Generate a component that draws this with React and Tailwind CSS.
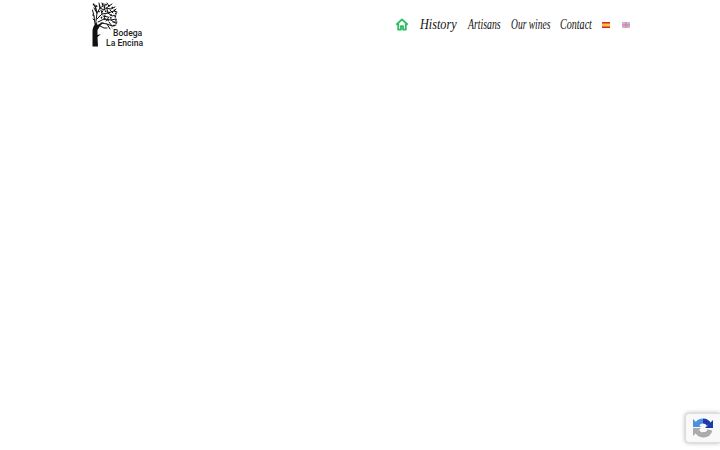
import React from "react";

function Tree() {
  return (
    <svg width="27" height="45" viewBox="0 0 27 45" className="block">
      <path d="M0.5 44.5V29C0.5 27 1.5 24 3 22L4 19 5.5 23 9 21 12 20 8 24 5.5 28 5.5 33 9 32 5.5 35 6 44.5Z" fill="#111" />
      <g stroke="#111" strokeWidth="1" fill="none" strokeLinecap="round">
        <path d="M3 22 2 14 0.5 8M4 19 5 11 3 3M2 14 0.5 13M5 11 8 6 7 1M5 11 2 6 M8 6 11 4 10 1M8 6 12 8 17 4 15 1M12 8 13 3M17 4 20 2M14 6 19 7 23 5" />
        <path d="M5 17 10 12 16 11 22 9 25 10M10 12 9 8M16 11 15 7 M16 11 20 14 24 13M6 20 12 17 19 18 24 17M12 17 13 13M19 18 23 21M9 21 15 22 20 24 24 23M15 22 18 27M8 24 12 26 15 26M20 24 17 20M22 9 24 7M2 3 4 7M1 17 3 19M12 2 12 5M18 8 21 11M11 14 16 15M14 19 17 15M21 20 25 20" />
      </g>
      <g stroke="#111" strokeWidth="1.6" strokeDasharray="1.5 2" fill="none">
        <path d="M1 2 6 5 11 2 16 3 21 6 24 11 23 16 25 20 20 26" />
        <path d="M3 8 8 10 13 9 18 11 20 15 16 18 10 16 7 14" />
      </g>
    </svg>
  );
}

function Flag({ children }) {
  return <svg width="8" height="6" viewBox="0 0 8 6" className="block">{children}</svg>;
}

const navClass = "block shrink-0 origin-left whitespace-nowrap text-[14px] leading-none italic text-[#111] [font-family:'Liberation_Serif',cursive]";

export default function App() {
  return (
    <div className="relative h-[450px] w-[720px] overflow-hidden bg-white">
      <header className="mx-auto flex h-[50px] w-[540px] items-start justify-between pl-0.5">
        <div className="relative mt-0.5 h-[45px] w-[52px]">
          <Tree />
          <div className="absolute left-[14px] top-[26px] whitespace-nowrap text-[8.6px] font-medium leading-[10px] text-[#222] [font-family:'Roboto',sans-serif]">
            <div className="pl-[7px]">Bodega</div>
            <div>La Encina</div>
          </div>
        </div>
        <nav className="mt-[17px] flex h-4 items-center">
          <svg width="14" height="13" viewBox="0 0 24 24" fill="none" stroke="#2dbd62" strokeWidth="3.4" strokeLinejoin="round" className="mr-[5px] -mt-0.5">
            <path d="M1.5 12.5 12 2.5 22.5 12.5M5 10v11.5h5V15h4v6.5h5V10" />
          </svg>
          <span className={`${navClass} ml-[6px] w-[37px] scale-x-[0.87]`}>History</span>
          <span className={`${navClass} ml-[11px] w-[32px] scale-x-[0.7]`}>Artisans</span>
          <span className={`${navClass} ml-[11px] w-[38px] scale-x-[0.68]`}>Our wines</span>
          <span className={`${navClass} ml-[11px] w-[31px] scale-x-[0.72]`}>Contact</span>
          <div className="ml-[11px] flex items-center gap-3">
            <Flag>
              <rect width="8" height="6" fill="#d8262c" />
              <rect y="1.5" width="8" height="3" fill="#f5c63b" />
            </Flag>
            <Flag>
              <rect width="8" height="6" fill="#c9b6d0" />
              <path d="M0 3H8M4 0V6" stroke="#d77a8e" strokeWidth="1" />
            </Flag>
          </div>
        </nav>
      </header>
      <div className="absolute left-[685px] top-[413px] flex h-[30px] w-[35px] items-center rounded-l-sm border border-r-0 border-[#ddd] bg-[#f9f9f9] pl-[6px] shadow-[0_0_4px_rgba(0,0,0,0.3)]">
        <svg width="22" height="22" viewBox="0 0 22 22" fill="none">
          <path d="M4.5 9A7 7 0 0 1 11 4" stroke="#4a90e2" strokeWidth="5" />
          <path d="M1 2v8h8Z" fill="#4a90e2" />
          <path d="M11 4A7 7 0 0 1 17 7.5" stroke="#1c3aa9" strokeWidth="5" />
          <path d="M21 3v8h-8Z" fill="#1c3aa9" />
          <path d="M18 13A7 7 0 0 1 5 14" stroke="#ababab" strokeWidth="5" />
          <path d="M1 11h8l-8 8Z" fill="#ababab" />
          <path d="M11 15h4v5h-4Z" fill="#ababab" />
        </svg>
      </div>
    </div>
  );
}
